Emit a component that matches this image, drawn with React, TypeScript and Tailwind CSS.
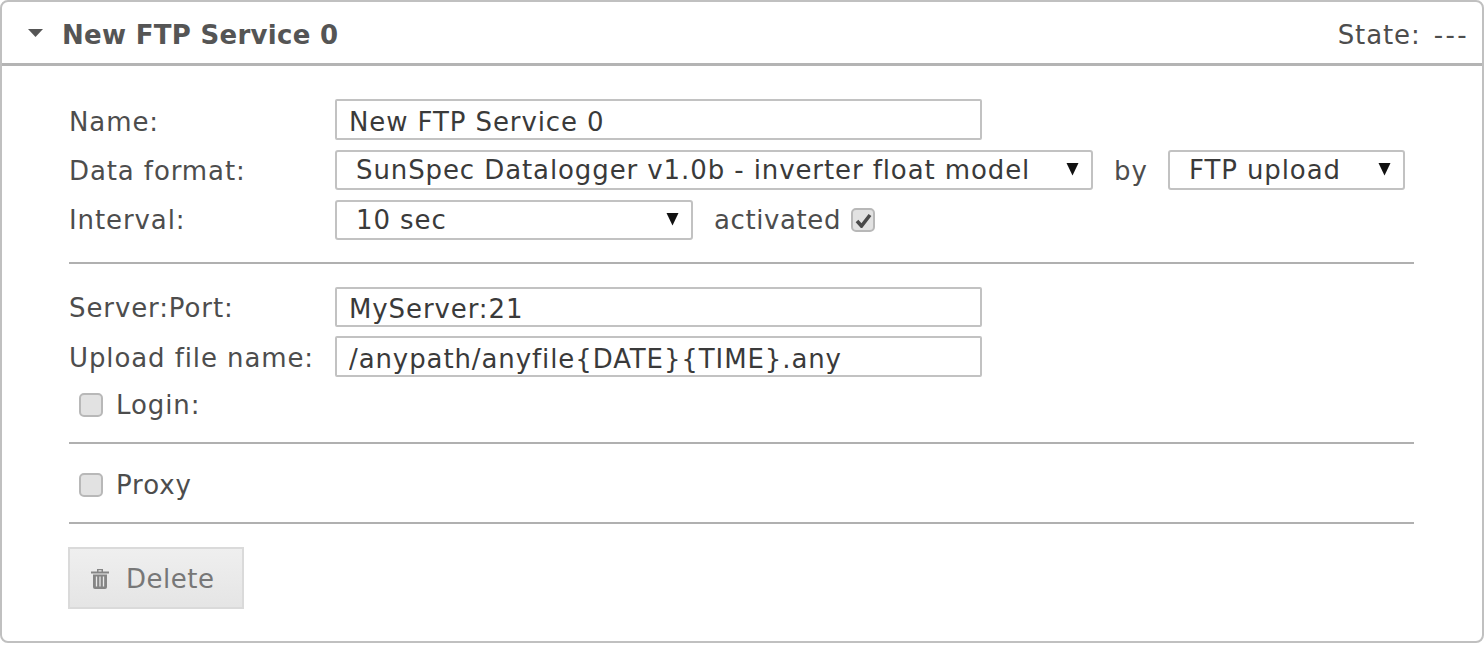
const Arrow = () => (
  <svg width="13" height="14" viewBox="0 0 13 14" className="block">
    <path d="M0.5 1 H12.5 L6.5 13.5 Z" fill="#111" />
  </svg>
);

const TextBox = ({ value, height }: { value: string; height: string }) => (
  <input
    readOnly
    value={value}
    className={`w-[647px] ${height} border-2 border-[#c2c2c2] rounded-[2px] bg-white pl-[12px] pt-[4px] text-[#3a3a3a] outline-none`}
  />
);

const SelectBox = ({ value, width }: { value: string; width: string }) => (
  <div className={`${width} h-[40px] border-2 border-[#c2c2c2] rounded-[3px] bg-white pl-[19px] pr-[12px] flex items-center justify-between text-[#3a3a3a]`}>
    <span>{value}</span>
    <span className="-mt-[2px]"><Arrow /></span>
  </div>
);

const Check = ({ checked }: { checked?: boolean }) => (
  <span className="w-[24px] h-[24px] rounded-[5px] border-2 border-[#b8b8b8] bg-[#e2e2e2] flex items-center justify-center shrink-0">
    {checked && (
      <svg width="17" height="15" viewBox="0 0 17 15">
        <path d="M2 8 L6.5 13 L15 2" fill="none" stroke="#4a4a4a" strokeWidth="3.6" />
      </svg>
    )}
  </span>
);

const TrashIcon = () => (
  <svg width="18" height="21" viewBox="0 0 18 21" className="shrink-0">
    <path d="M0 3.5 H18 V5.5 H0 Z M6 3.5 V1 H12 V3.5 H10.5 V2.3 H7.5 V3.5 Z" fill="#858585" />
    <path d="M2 6.5 H16 V19 Q16 21 14 21 H4 Q2 21 2 19 Z" fill="#858585" />
    <path d="M5.5 8.5 V18.5 M9 8.5 V18.5 M12.5 8.5 V18.5" stroke="#e9e9e9" strokeWidth="1.3" />
  </svg>
);

const Divider = () => <div className="h-[2px] bg-[#b0b0b0]" />;

export default function App() {
  return (
    <div className="w-[1484px] h-[645px] bg-white overflow-hidden font-['DejaVu_Sans',sans-serif] text-[26px] tracking-[0.9px] leading-[30px] text-[#4d4d4d]">
      <div className="h-[643px] border-2 border-[#c0c0c0] rounded-[8px]">
        <div className="h-[64px] border-b-[3px] border-[#b4b4b4] flex items-center justify-between pl-[25px] pr-[13px]">
          <div className="flex items-center gap-[18px]">
            <svg width="17" height="10" viewBox="0 0 17 10"><path d="M1 1 H16 L8.5 9 Z" fill="#555" /></svg>
            <span className="font-bold text-[#555] tracking-[0.3px] pt-[4px]">New FTP Service 0</span>
          </div>
          <div className="flex items-center gap-[13px] pt-[4px]">
            <span>State:</span>
            <span className="tracking-[2.4px]">---</span>
          </div>
        </div>
        <div className="pl-[67px] pr-[68px] pt-[33px]">
          <div className="flex flex-col gap-[10px]">
            <div className="flex items-center">
              <label className="w-[266px] pt-[4px]">Name:</label>
              <TextBox value="New FTP Service 0" height="h-[41px]" />
            </div>
            <div className="flex items-center">
              <label className="w-[266px] pt-[1px]">Data format:</label>
              <SelectBox value="SunSpec Datalogger v1.0b - inverter float model" width="w-[758px]" />
              <span className="w-[75px] pl-[21px] pt-[1px]">by</span>
              <SelectBox value="FTP upload" width="w-[237px]" />
            </div>
            <div className="flex items-center">
              <label className="w-[266px]">Interval:</label>
              <SelectBox value="10 sec" width="w-[358px]" />
              <span className="w-[158px] pl-[21px] tracking-[0.6px]">activated</span>
              <Check checked />
            </div>
          </div>
          <div className="mt-[22px]"><Divider /></div>
          <div className="mt-[23px] flex flex-col gap-[9px]">
            <div className="flex items-center">
              <label className="w-[266px] pt-[2px]">Server:Port:</label>
              <TextBox value="MyServer:21" height="h-[40px]" />
            </div>
            <div className="flex items-center">
              <label className="w-[266px] pt-[2px]">Upload file name:</label>
              <TextBox value="/anypath/anyfile{DATE}{TIME}.any" height="h-[41px]" />
            </div>
          </div>
          <div className="mt-[13px] pl-[10px] flex items-center gap-[13px]">
            <Check />
            <span>Login:</span>
          </div>
          <div className="mt-[22px]"><Divider /></div>
          <div className="mt-[26px] pl-[10px] flex items-center gap-[13px]">
            <Check />
            <span>Proxy</span>
          </div>
          <div className="mt-[22px]"><Divider /></div>
          <button className="mt-[23px] -ml-[1px] w-[176px] h-[62px] border-2 border-[#dadada] bg-gradient-to-b from-[#efefef] to-[#e5e5e5] flex items-center pl-[21px] gap-[17px] text-[#777] tracking-[0.5px]">
            <TrashIcon />
            <span className="pt-[2px]">Delete</span>
          </button>
        </div>
      </div>
    </div>
  );
}
